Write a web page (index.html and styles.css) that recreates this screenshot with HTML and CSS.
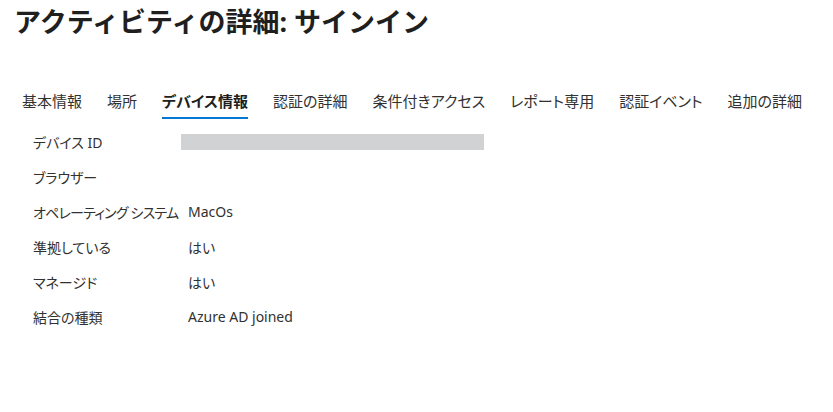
FILE: index.html
```html
<!DOCTYPE html>
<html lang="ja">
<head>
<meta charset="utf-8">
<link rel="stylesheet" href="styles.css">
</head>
<body>
<h1 class="title">アクティビティの詳細: サインイン</h1>
<nav class="tabs">
  <span class="tab">基本情報</span>
  <span class="tab">場所</span>
  <span class="tab active">デバイス情報</span>
  <span class="tab">認証の詳細</span>
  <span class="tab">条件付きアクセス</span>
  <span class="tab">レポート専用</span>
  <span class="tab">認証イベント</span>
  <span class="tab">追加の詳細</span>
</nav>
<div class="rows">
  <div class="row"><span class="label">デバイス ID</span><span class="value"><span class="redact"></span></span></div>
  <div class="row"><span class="label">ブラウザー</span><span class="value"></span></div>
  <div class="row"><span class="label condensed">オペレーティング システム</span><span class="value">MacOs</span></div>
  <div class="row"><span class="label">準拠している</span><span class="value">はい</span></div>
  <div class="row"><span class="label">マネージド</span><span class="value">はい</span></div>
  <div class="row"><span class="label">結合の種類</span><span class="value">Azure AD joined</span></div>
</div>
</body>
</html>
```
FILE: styles.css
```css
html, body {
  margin: 0;
  background: #ffffff;
}
body {
  padding: 0 14px;
  font-family: "Noto Sans", "Noto Sans CJK JP", sans-serif;
  font-feature-settings: "palt";
  color: #323130;
}
.title {
  margin: 6px 0 0 0;
  font-size: 27px;
  line-height: 32px;
  font-weight: 700;
  color: #1f1f1f;
  font-feature-settings: normal;
}
.tabs {
  display: flex;
  gap: 25px;
  margin-top: 50px;
  padding-left: 8px;
}
.tab {
  font-size: 15px;
  line-height: 20px;
  padding: 3px 0 6px 0;
  border-bottom: 2px solid transparent;
  white-space: nowrap;
  color: #323130;
}
.tab.active {
  font-weight: 700;
  border-bottom-color: #0078d4;
  color: #201f1e;
}
.rows {
  margin-top: 5px;
  padding-left: 19px;
}
.row {
  display: grid;
  grid-template-columns: 155px auto;
  align-items: center;
  height: 35px;
  font-size: 14px;
}
.label {
  white-space: nowrap;
}
.label.condensed {
  letter-spacing: -0.8px;
}
.value {
  display: flex;
  align-items: center;
}
.redact {
  display: block;
  margin-left: -7px;
  width: 303px;
  height: 16px;
  background: #d1d2d3;
}
```
